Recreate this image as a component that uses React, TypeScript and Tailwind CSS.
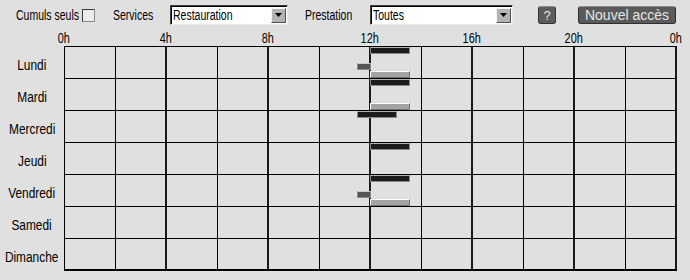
import React from "react";

const FONT = { fontFamily: '"Liberation Sans", Arial, sans-serif' };

const hours = ["0h", "4h", "8h", "12h", "16h", "20h", "0h"];

type Bar = { left: number; width: number; top: number; kind: "black" | "dark" | "light" };

const days: { name: string; bars: Bar[] }[] = [
  {
    name: "Lundi",
    bars: [
      { left: 305, width: 40, top: 0, kind: "black" },
      { left: 292, width: 14, top: 16, kind: "dark" },
      { left: 305, width: 40, top: 24, kind: "light" },
    ],
  },
  {
    name: "Mardi",
    bars: [
      { left: 305, width: 40, top: 0, kind: "black" },
      { left: 305, width: 40, top: 24, kind: "light" },
    ],
  },
  { name: "Mercredi", bars: [{ left: 292, width: 40, top: 0, kind: "black" }] },
  { name: "Jeudi", bars: [{ left: 305, width: 40, top: 0, kind: "black" }] },
  {
    name: "Vendredi",
    bars: [
      { left: 305, width: 40, top: 0, kind: "black" },
      { left: 292, width: 14, top: 16, kind: "dark" },
      { left: 305, width: 40, top: 24, kind: "light" },
    ],
  },
  { name: "Samedi", bars: [] },
  { name: "Dimanche", bars: [] },
];

const barClass = {
  black: "bg-[#1c1c1c] border border-[#8a8a8a] border-t-[#b0b0b0]",
  dark: "bg-[#555555] border border-[#8a8a8a] border-t-[#c8c8c8]",
  light: "bg-[#a4a4a4] border border-t-white border-l-white border-r-[#707070] border-b-[#707070]",
};

// police étroite simulée (pas de Liberation Sans Narrow installée)
function Narrow({
  children,
  className = "",
  scale = "scale-x-[0.75]",
  origin = "origin-left",
}: {
  children: React.ReactNode;
  className?: string;
  scale?: string;
  origin?: string;
}) {
  return <span className={`inline-block whitespace-nowrap ${scale} ${origin} ${className}`}>{children}</span>;
}

function Select({ value, width }: { value: string; width: string }) {
  return (
    <div
      className={`${width} shrink-0 h-[20px] flex items-center bg-white border border-t-[#404040] border-l-[#404040] border-r-[#e8e8e8] border-b-[#e8e8e8] shadow-[inset_1px_1px_0_#000]`}
    >
      <div className="flex-1 min-w-0 pl-[2px] overflow-hidden">
        <Narrow className="text-[14px] leading-none text-black">{value}</Narrow>
      </div>
      <div className="w-[15px] h-[15px] mr-[1px] flex items-center justify-center bg-[#b4b4b4] border border-t-[#f4f4f4] border-l-[#f4f4f4] border-r-[#505050] border-b-[#505050]">
        <svg width="7" height="4" viewBox="0 0 7 4">
          <path d="M0 0h7L3.5 4z" fill="#000" />
        </svg>
      </div>
    </div>
  );
}

export default function App() {
  return (
    <div className="w-[690px] h-[280px] overflow-hidden bg-[#e0e0e0] text-black" style={FONT}>
      {/* barre de filtres */}
      <div className="pt-[5px] flex items-center h-[25px]">
        <div className="ml-[16px] w-[66px] min-w-0 shrink-0 leading-none">
          <Narrow className="text-[14px]">Cumuls seuls</Narrow>
        </div>
        <div className="w-[13px] h-[13px] shrink-0 border border-[#3a3a3a] border-r-[#8a8a8a] border-b-[#8a8a8a] bg-[#ececec]" />
        <div className="ml-[18px] w-[57px] min-w-0 shrink-0 leading-none">
          <Narrow className="text-[14px]">Services</Narrow>
        </div>
        <Select value="Restauration" width="w-[118px]" />
        <div className="ml-[17px] w-[65px] min-w-0 shrink-0 leading-none">
          <Narrow className="text-[14px]">Prestation</Narrow>
        </div>
        <Select value="Toutes" width="w-[143px]" />
        <button className="ml-[25px] shrink-0 w-[18px] h-[18px] rounded-[3px] bg-[#5c5c5c] border border-[#333] border-t-[#8a8a8a] text-[#e4e4e4] text-[13px] leading-none flex items-center justify-center">
          ?
        </button>
        <button className="ml-[22px] shrink-0 w-[98px] h-[18px] rounded-[3px] bg-[#5a5a5a] border border-[#2e2e2e] border-t-[#8a8a8a] text-[#e6e6e6] text-[14px] leading-none flex items-center justify-center">
          Nouvel accès
        </button>
      </div>

      {/* heures */}
      <div className="h-[21px] pt-[5px] ml-[64px] w-[612px] flex justify-between">
        {hours.map((h, i) => (
          <div key={i} className="w-0 flex justify-center">
            <Narrow scale="scale-x-[0.78]" origin="origin-center" className="text-[14px] leading-[16px]">
              {h}
            </Narrow>
          </div>
        ))}
      </div>

      {/* grille */}
      <div className="ml-[64px] w-[613px] h-px bg-black" />
      {days.map((day, r) => (
        <div key={day.name} className="flex h-[32px]">
          <div className="w-[64px] shrink-0 flex items-center justify-center pt-[5px] leading-none">
            <Narrow scale="scale-x-[0.82]" origin="origin-center" className="text-[14.5px]">
              {day.name}
            </Narrow>
          </div>
          <div
            className={`relative flex border-l border-black ${r === days.length - 1 ? "border-b-2" : "border-b"} border-b-black`}
          >
            {Array.from({ length: 12 }).map((_, c) => (
              <div
                key={c}
                className={`w-[51px] h-full ${c % 2 === 1 ? "border-r-2 border-[#1a1a1a]" : "border-r border-black"}`}
              />
            ))}
            {day.bars.map((b, i) => (
              <div
                key={i}
                className={`absolute h-[7px] ${barClass[b.kind]}`}
                style={{ left: b.left, width: b.width, top: b.top }}
              />
            ))}
          </div>
        </div>
      ))}
    </div>
  );
}
